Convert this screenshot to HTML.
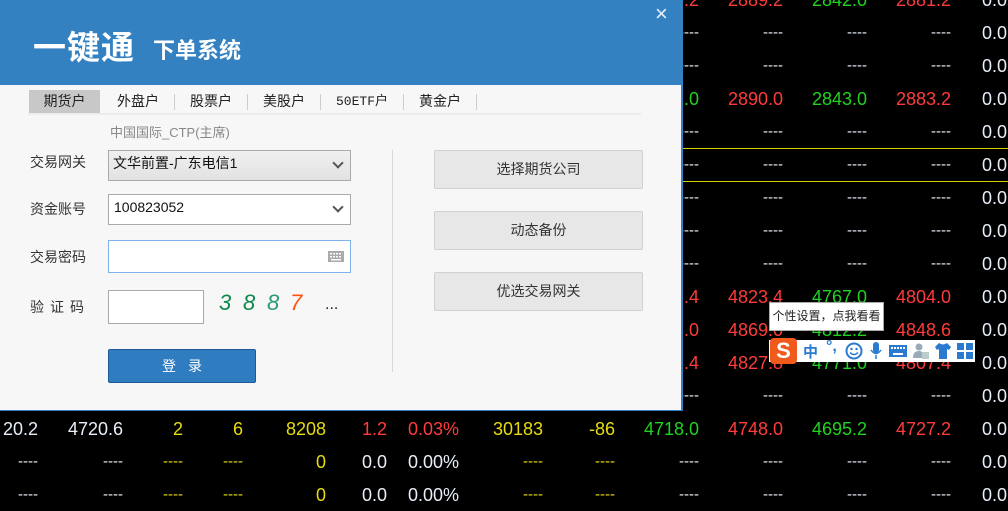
<!DOCTYPE html>
<html><head><meta charset="utf-8"><style>
*{margin:0;padding:0;box-sizing:border-box}
body{width:1008px;height:511px;background:#000;position:relative;overflow:hidden;font-family:"Liberation Sans","Noto Sans CJK SC",sans-serif}
.c{position:absolute;font-size:18px;line-height:22px;text-align:right;white-space:nowrap}
.r{color:#ff3b3b}.g{color:#1fd31f}.w{color:#e8eef8}.y{color:#e6dc10}
.d{font-size:15px}
.yl{position:absolute;left:683px;width:325px;height:1px;background:#d8d000}
#dlg{position:absolute;left:0;top:0;width:683px;height:411px;background:#f7f7f7;border-right:2px solid #3481c2;border-bottom:1px solid #3481c2}
#hd{position:absolute;left:0;top:0;width:681px;height:85px;background:#3481c2;color:#fff}
.a{position:absolute;white-space:nowrap}
.lbl{position:absolute;left:30px;font-size:14px;color:#333}
.box{position:absolute;left:108px;width:243px;background:#fff;border:1px solid #aaa}
.btn{position:absolute;left:434px;width:209px;height:39px;background:#e7e7e7;border:1px solid #d0d0d0;border-radius:2px;text-align:center;line-height:37px;font-size:14px;color:#333}
.tab{position:absolute;top:90px;height:23px;line-height:23px;font-size:14px;color:#222;text-align:center}
.sep{position:absolute;top:94px;width:1px;height:16px;background:#ccc}
.chev{position:absolute;right:8px;top:8px;width:8px;height:8px;border-right:2px solid #555;border-bottom:2px solid #555;transform:rotate(45deg)}
</style></head><body>

<div class="c r" style="right:309px;top:-11px">.2</div><div class="c r" style="right:225px;top:-11px">2889.2</div><div class="c g" style="right:141px;top:-11px">2842.0</div><div class="c r" style="right:57px;top:-11px">2881.2</div>
<div class="c w" style="left:982px;top:22px;text-align:left">0.0</div>
<div class="c w" style="left:982px;top:55px;text-align:left">0.0</div>
<div class="c w" style="left:982px;top:-11px;text-align:left">0.0</div>
<div class="c w d" style="right:309px;top:22px">----</div><div class="c w d" style="right:225px;top:22px">----</div><div class="c w d" style="right:141px;top:22px">----</div><div class="c w d" style="right:57px;top:22px">----</div>
<div class="c w d" style="right:309px;top:55px">----</div><div class="c w d" style="right:225px;top:55px">----</div><div class="c w d" style="right:141px;top:55px">----</div><div class="c w d" style="right:57px;top:55px">----</div>
<div class="c g" style="right:309px;top:88px">.0</div><div class="c r" style="right:225px;top:88px">2890.0</div><div class="c g" style="right:141px;top:88px">2843.0</div><div class="c r" style="right:57px;top:88px">2883.2</div><div class="c w" style="left:982px;top:88px;text-align:left">0.0</div>
<div class="c w d" style="right:309px;top:121px">----</div><div class="c w d" style="right:225px;top:121px">----</div><div class="c w d" style="right:141px;top:121px">----</div><div class="c w d" style="right:57px;top:121px">----</div><div class="c w" style="left:982px;top:121px;text-align:left">0.0</div>
<div class="yl" style="top:148px"></div>
<div class="c w d" style="right:309px;top:154px">----</div><div class="c w d" style="right:225px;top:154px">----</div><div class="c w d" style="right:141px;top:154px">----</div><div class="c w d" style="right:57px;top:154px">----</div><div class="c w" style="left:982px;top:154px;text-align:left">0.0</div>
<div class="yl" style="top:181px"></div>
<div class="c w d" style="right:309px;top:187px">----</div><div class="c w d" style="right:225px;top:187px">----</div><div class="c w d" style="right:141px;top:187px">----</div><div class="c w d" style="right:57px;top:187px">----</div><div class="c w" style="left:982px;top:187px;text-align:left">0.0</div>
<div class="c w d" style="right:309px;top:220px">----</div><div class="c w d" style="right:225px;top:220px">----</div><div class="c w d" style="right:141px;top:220px">----</div><div class="c w d" style="right:57px;top:220px">----</div><div class="c w" style="left:982px;top:220px;text-align:left">0.0</div>
<div class="c w d" style="right:309px;top:253px">----</div><div class="c w d" style="right:225px;top:253px">----</div><div class="c w d" style="right:141px;top:253px">----</div><div class="c w d" style="right:57px;top:253px">----</div><div class="c w" style="left:982px;top:253px;text-align:left">0.0</div>
<div class="c r" style="right:309px;top:286px">.4</div><div class="c r" style="right:225px;top:286px">4823.4</div><div class="c g" style="right:141px;top:286px">4767.0</div><div class="c r" style="right:57px;top:286px">4804.0</div><div class="c w" style="left:982px;top:286px;text-align:left">0.0</div>
<div class="c r" style="right:309px;top:319px">.0</div><div class="c r" style="right:225px;top:319px">4869.0</div><div class="c g" style="right:141px;top:319px">4812.2</div><div class="c r" style="right:57px;top:319px">4848.6</div><div class="c w" style="left:982px;top:319px;text-align:left">0.0</div>
<div class="c r" style="right:309px;top:352px">.4</div><div class="c r" style="right:225px;top:352px">4827.8</div><div class="c g" style="right:141px;top:352px">4771.0</div><div class="c r" style="right:57px;top:352px">4807.4</div><div class="c w" style="left:982px;top:352px;text-align:left">0.0</div>
<div class="c w d" style="right:309px;top:385px">----</div><div class="c w d" style="right:225px;top:385px">----</div><div class="c w d" style="right:141px;top:385px">----</div><div class="c w d" style="right:57px;top:385px">----</div><div class="c w" style="left:982px;top:385px;text-align:left">0.0</div>

<div class="c w" style="right:970px;top:418px">20.2</div><div class="c w" style="right:885px;top:418px">4720.6</div><div class="c y" style="right:825px;top:418px">2</div><div class="c y" style="right:765px;top:418px">6</div><div class="c y" style="right:682px;top:418px">8208</div><div class="c r" style="right:621px;top:418px">1.2</div><div class="c r" style="right:549px;top:418px">0.03%</div><div class="c y" style="right:465px;top:418px">30183</div><div class="c y" style="right:393px;top:418px">-86</div><div class="c g" style="right:309px;top:418px">4718.0</div><div class="c r" style="right:225px;top:418px">4748.0</div><div class="c g" style="right:141px;top:418px">4695.2</div><div class="c r" style="right:57px;top:418px">4727.2</div><div class="c w" style="left:982px;top:418px;text-align:left">0.0</div>

<div class="c w d" style="right:970px;top:451px">----</div><div class="c w d" style="right:885px;top:451px">----</div><div class="c y d" style="right:825px;top:451px">----</div><div class="c y d" style="right:765px;top:451px">----</div><div class="c y" style="right:682px;top:451px">0</div><div class="c w" style="right:621px;top:451px">0.0</div><div class="c w" style="right:549px;top:451px">0.00%</div><div class="c y d" style="right:465px;top:451px">----</div><div class="c y d" style="right:393px;top:451px">----</div><div class="c w d" style="right:309px;top:451px">----</div><div class="c w d" style="right:225px;top:451px">----</div><div class="c w d" style="right:141px;top:451px">----</div><div class="c w d" style="right:57px;top:451px">----</div><div class="c w" style="left:982px;top:451px;text-align:left">0.0</div>

<div class="c w d" style="right:970px;top:484px">----</div><div class="c w d" style="right:885px;top:484px">----</div><div class="c y d" style="right:825px;top:484px">----</div><div class="c y d" style="right:765px;top:484px">----</div><div class="c y" style="right:682px;top:484px">0</div><div class="c w" style="right:621px;top:484px">0.0</div><div class="c w" style="right:549px;top:484px">0.00%</div><div class="c y d" style="right:465px;top:484px">----</div><div class="c y d" style="right:393px;top:484px">----</div><div class="c w d" style="right:309px;top:484px">----</div><div class="c w d" style="right:225px;top:484px">----</div><div class="c w d" style="right:141px;top:484px">----</div><div class="c w d" style="right:57px;top:484px">----</div><div class="c w" style="left:982px;top:484px;text-align:left">0.0</div>

<div id="dlg">
 <div id="hd">
  <div class="a" style="left:33px;top:28px;font-size:33px;line-height:40px;letter-spacing:1px;font-weight:bold">一键通</div>
  <div class="a" style="left:153px;top:37px;font-size:22px;line-height:28px;font-weight:bold">下单系统</div>
  <div class="a" style="left:655px;top:2px;font-size:22px;line-height:24px;color:#e8f0fa">×</div>
 </div>
 <div style="position:absolute;left:29px;top:90px;width:71px;height:23px;background:#c8c8c8"></div>
 <div class="tab" style="left:29px;width:71px">期货户</div>
 <div class="tab" style="left:102px;width:72px">外盘户</div><div class="sep" style="left:174px"></div>
 <div class="tab" style="left:175px;width:72px">股票户</div><div class="sep" style="left:247px"></div>
 <div class="tab" style="left:248px;width:72px">美股户</div><div class="sep" style="left:320px"></div>
 <div class="tab" style="left:321px;width:82px;font-family:'Liberation Mono','Noto Sans CJK SC',monospace;font-size:13px">50ETF户</div><div class="sep" style="left:403px"></div>
 <div class="tab" style="left:404px;width:72px">黄金户</div><div class="sep" style="left:476px"></div>
 <div style="position:absolute;left:28px;top:113px;width:613px;height:2px;background:#ececec"></div>
 <div class="a" style="left:110px;top:122px;font-size:13px;color:#888">中国国际_CTP(主席)</div>

 <div class="lbl" style="top:152px">交易网关</div>
 <div class="box" style="top:150px;height:31px;background:linear-gradient(#f0f0f0,#e2e2e2)"><div class="a" style="left:4px;top:2px;font-size:14px;color:#111">文华前置-广东电信1</div><div class="chev"></div></div>
 <div class="lbl" style="top:199px">资金账号</div>
 <div class="box" style="top:194px;height:31px"><div class="a" style="left:5px;top:4px;font-size:14px;color:#111">100823052</div><div class="chev"></div></div>
 <div class="lbl" style="top:247px">交易密码</div>
 <div class="box" style="top:240px;height:33px;border-color:#7eb4ea">
  <svg class="a" style="left:219px;top:10px" width="16" height="11"><rect x="0" y="0" width="16" height="11" fill="#aaa"/><g fill="#fff"><rect x="2" y="2" width="2" height="1.5"/><rect x="5" y="2" width="2" height="1.5"/><rect x="8" y="2" width="2" height="1.5"/><rect x="11" y="2" width="2" height="1.5"/><rect x="2" y="5" width="2" height="1.5"/><rect x="5" y="5" width="2" height="1.5"/><rect x="8" y="5" width="2" height="1.5"/><rect x="11" y="5" width="2" height="1.5"/><rect x="3" y="8" width="10" height="1.5"/></g></svg>
 </div>
 <div class="lbl" style="top:297px;letter-spacing:6px">验证码</div>
 <div class="box" style="top:290px;width:96px;height:34px"></div>
 <div class="a" style="left:219px;top:291px;font-size:22px;line-height:24px;font-style:italic;font-family:'Liberation Sans',sans-serif">
  <span class="a" style="left:0;color:#0a8a4a">3</span><span class="a" style="left:24px;color:#0a8a4a">8</span><span class="a" style="left:48px;color:#2a9a7a">8</span><span class="a" style="left:71px;color:#ff5010">7</span></div>
 <div class="a" style="left:325px;top:296px;font-size:16px;color:#222">...</div>
 <div style="position:absolute;left:108px;top:349px;width:148px;height:34px;background:#2f7cc1;border:1px solid #1c5a99;border-radius:2px;color:#fff;text-align:center;line-height:32px;font-size:14px;letter-spacing:12px;padding-left:12px">登录</div>

 <div style="position:absolute;left:392px;top:150px;width:1px;height:222px;background:#d8d8d8"></div>
 <div class="btn" style="top:150px">选择期货公司</div>
 <div class="btn" style="top:211px">动态备份</div>
 <div class="btn" style="top:272px">优选交易网关</div>
</div>

<div style="position:absolute;left:769px;top:302px;width:115px;height:29px;background:#fff;border:1px solid #aaa;font-size:12px;line-height:27px;text-align:center;color:#222">个性设置，点我看看</div>
<div style="position:absolute;left:769px;top:340px;width:206px;height:22px;background:#fff"></div>
<div style="position:absolute;left:770px;top:338px;width:27px;height:26px;background:#f05a1a;border-radius:4px;color:#fff;font-weight:bold;font-size:22px;line-height:26px;text-align:center">S</div>
<div class="a" style="left:803px;top:341px;font-size:15px;color:#2a7ad0;font-weight:bold">中</div>
<div class="a" style="left:826px;top:338px;font-size:16px;color:#2a7ad0;font-weight:bold">°,</div>
<svg class="a" style="left:845px;top:342px" width="18" height="18"><circle cx="9" cy="9" r="7.5" fill="none" stroke="#2a7ad0" stroke-width="2"/><circle cx="6.5" cy="7" r="1.2" fill="#2a7ad0"/><circle cx="11.5" cy="7" r="1.2" fill="#2a7ad0"/><path d="M5 10.5 Q9 14.5 13 10.5" fill="none" stroke="#2a7ad0" stroke-width="1.5"/></svg>
<svg class="a" style="left:869px;top:342px" width="14" height="18"><rect x="4" y="0" width="6" height="11" rx="3" fill="#2a7ad0"/><path d="M2 8 Q7 15 12 8 M7 13 V17" fill="none" stroke="#2a7ad0" stroke-width="1.5"/></svg>
<svg class="a" style="left:889px;top:345px" width="18" height="12"><rect width="18" height="12" fill="#2a7ad0"/><g fill="#fff"><rect x="2" y="2" width="2" height="2"/><rect x="5" y="2" width="2" height="2"/><rect x="8" y="2" width="2" height="2"/><rect x="11" y="2" width="2" height="2"/><rect x="14" y="2" width="2" height="2"/><rect x="4" y="8" width="10" height="2"/></g></svg>
<svg class="a" style="left:912px;top:342px" width="18" height="18"><circle cx="7" cy="5" r="3.5" fill="#9ab"/><path d="M1 16 Q1 9 7 9 Q10 9 11 11 V16Z" fill="#9ab"/><rect x="10" y="10" width="7" height="7" fill="#bcc"/></svg>
<svg class="a" style="left:934px;top:342px" width="18" height="18"><path d="M5 1 L1 5 L3 8 L5 7 V17 H13 V7 L15 8 L17 5 L13 1 Q9 4 5 1Z" fill="#2a7ad0"/></svg>
<svg class="a" style="left:957px;top:343px" width="16" height="16"><rect x="0" y="0" width="7" height="7" fill="#2a7ad0"/><rect x="9" y="0" width="7" height="7" fill="#2a7ad0"/><rect x="0" y="9" width="7" height="7" fill="#2a7ad0"/><rect x="9" y="9" width="7" height="7" fill="#2a7ad0"/></svg>
</body></html>
